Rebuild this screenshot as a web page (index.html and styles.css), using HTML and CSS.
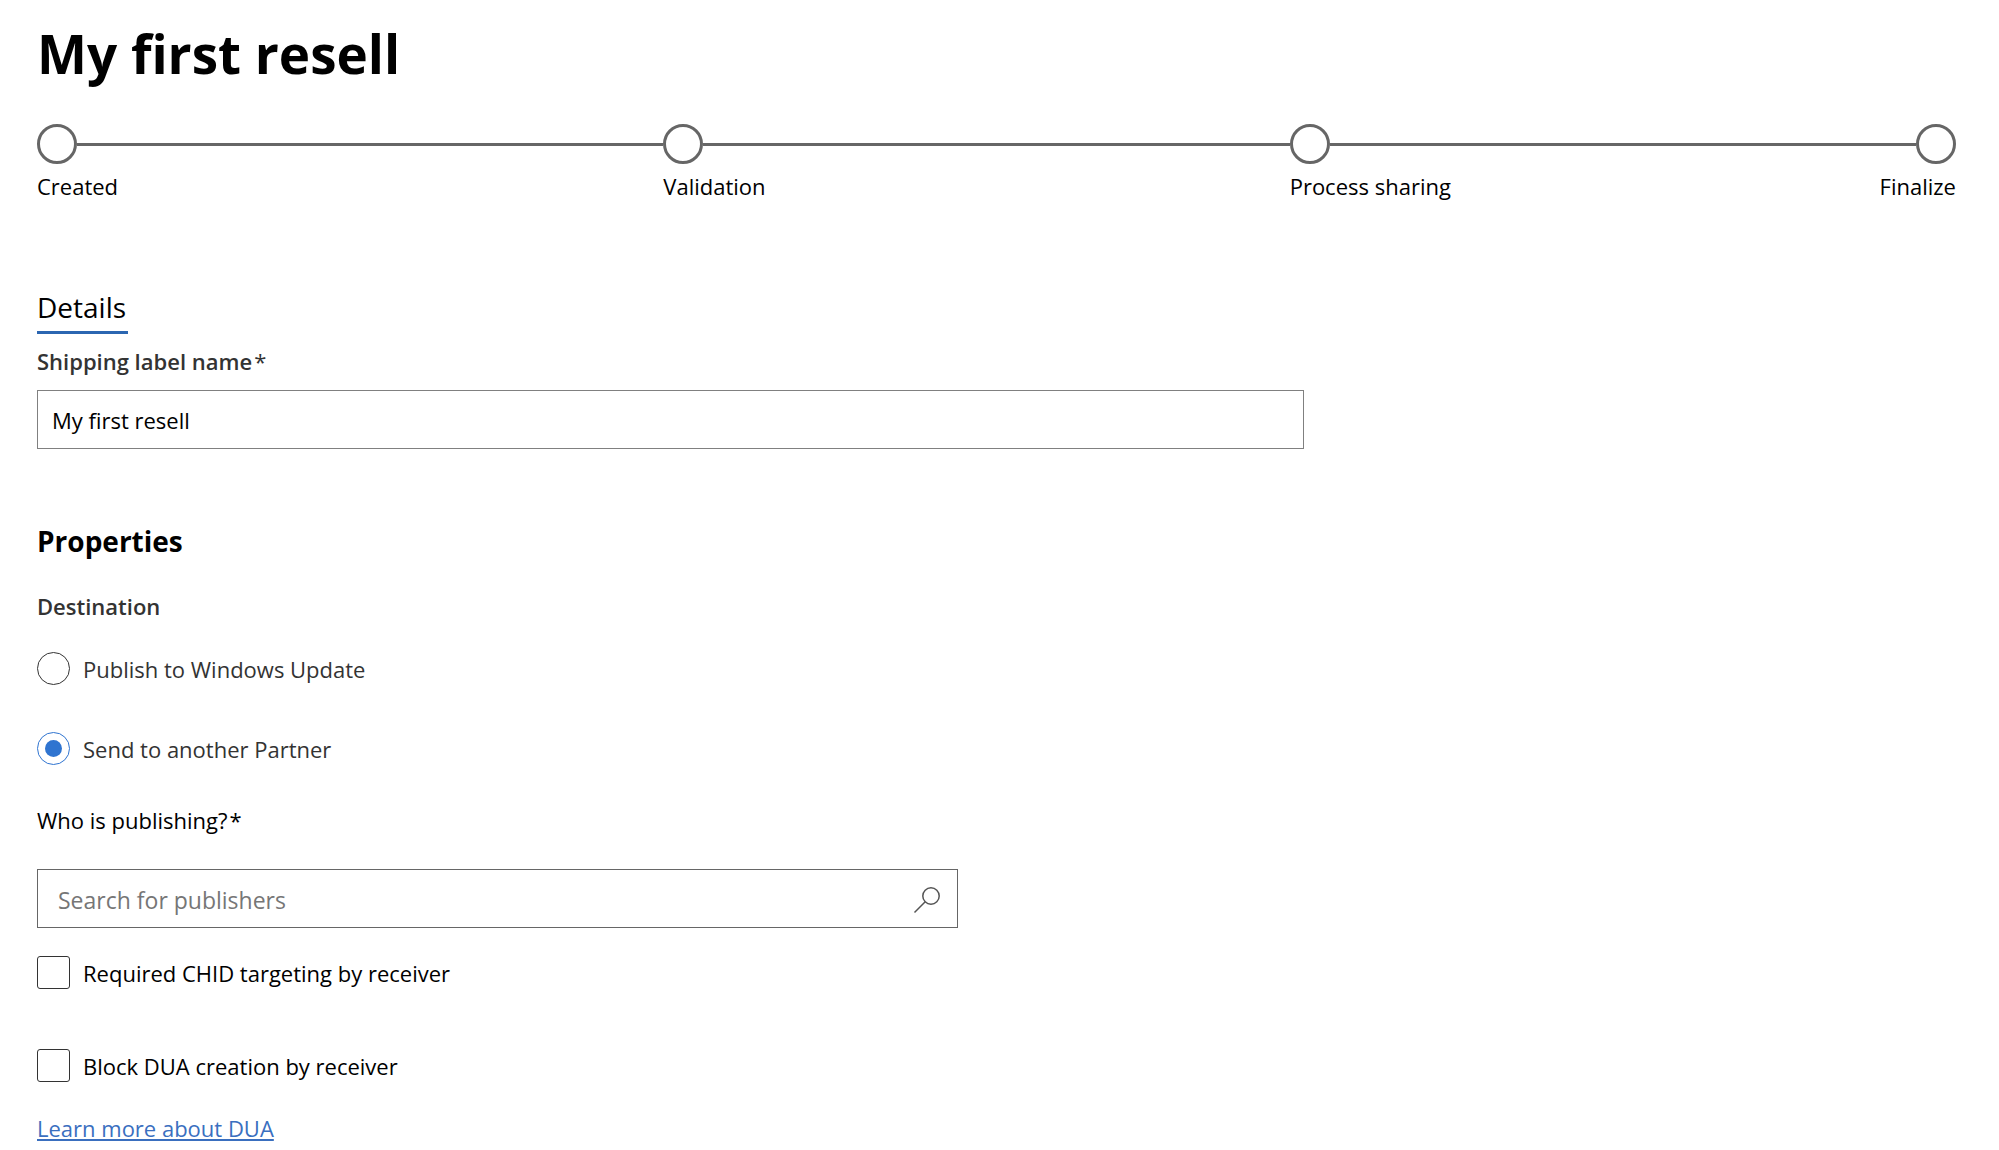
FILE: index.html
```html
<!DOCTYPE html>
<html lang="en">
<head>
    <meta charset="UTF-8" />
    <title>My first resell</title>
    <link rel="stylesheet" href="styles.css">
</head>
<body>
    <main class="page">
        <h1>My first resell</h1>

        <ol class="stepper">
            <li class="step"><div class="step-track"><span class="step-dot"></span></div><span class="step-label">Created</span></li>
            <li class="step"><div class="step-track"><span class="step-dot"></span></div><span class="step-label">Validation</span></li>
            <li class="step"><div class="step-track"><span class="step-dot"></span></div><span class="step-label">Process sharing</span></li>
            <li class="step"><div class="step-track"><span class="step-dot"></span></div><span class="step-label">Finalize</span></li>
        </ol>

        <form>
            <h2 class="tab-title">Details</h2>
            <label class="label strong" for="labelName">Shipping label name<span class="required">*</span></label>
            <input class="text-input" type="text" id="labelName" value="My first resell" required />

            <h2 class="section-title">Properties</h2>
            <fieldset class="destination">
                <legend class="label strong">Destination</legend>
                <label class="option"><input type="radio" name="destination" value="wu" />Publish to Windows Update</label>
                <label class="option"><input type="radio" name="destination" value="partner" checked />Send to another Partner</label>
            </fieldset>

            <label class="label" for="publisher">Who is publishing?<span class="required">*</span></label>
            <div class="search">
                <input type="text" id="publisher" placeholder="Search for publishers" />
                <button type="button" aria-label="Search">
                    <svg width="28" height="28" viewBox="0 0 28 28" fill="none" stroke="#555" stroke-width="1.5">
                        <circle cx="18" cy="10" r="8.2" />
                        <path d="M12.2 15.8 1.5 26.5" />
                    </svg>
                </button>
            </div>

            <div class="checks">
                <label class="option"><input type="checkbox" name="chid" />Required CHID targeting by receiver</label>
                <label class="option"><input type="checkbox" name="dua" />Block DUA creation by receiver</label>
            </div>
            <a class="learn-more" href="#">Learn more about DUA</a>
        </form>
    </main>
</body>
</html>
```
FILE: styles.css
```css
:root {
    --step-size: 40px;
    --step-colour: #666;
    --text-dark: #333;
    --accent: #2f74d0;
}
* { box-sizing: border-box; }
body {
    font-family: "Segoe UI", "Open Sans", "Noto Sans", sans-serif;
    font-size: 22px;
    line-height: 32px;
    background: #fff;
    color: #000;
    margin: 0;
}
input, button { font: inherit; color: inherit; }
.page { padding: 18px 43px 0 37px; }
h1 {
    font-size: 53px;
    line-height: 72px;
    font-weight: 700;
    margin: 0 0 34px;
}

/* Progress stepper */
.stepper {
    display: flex;
    list-style: none;
    margin: 0 0 85px;
    padding: 0;
}
.step {
    flex: 1;
    min-width: 0;
    display: flex;
    flex-direction: column;
    gap: 6px;
}
.step-track {
    display: flex;
    align-items: center;
}
.step-dot {
    flex: none;
    width: var(--step-size);
    height: var(--step-size);
    border: 3px solid var(--step-colour);
    border-radius: 50%;
}
.step-track::after {
    content: "";
    flex: 1;
    height: 3px;
    background: var(--step-colour);
}
.step-label { white-space: nowrap; }
.step:last-child {
    flex: 0 0 var(--step-size);
    align-items: flex-end;
}
.step:last-child .step-track::after { display: none; }

/* Headings and labels */
.tab-title {
    width: fit-content;
    font-size: 28px;
    line-height: 40px;
    font-weight: 400;
    margin: 0 0 11px;
    padding: 0 2px 4px 0;
    border-bottom: 3px solid #2b66b1;
}
.section-title {
    font-size: 28px;
    line-height: 40px;
    font-weight: 700;
    margin: 72px 0 29px;
}
.label { display: block; }
.strong {
    color: var(--text-dark);
    font-weight: 600;
}
.required {
    font-weight: 400;
    padding-left: 2px;
}

/* Text boxes */
.text-input {
    display: block;
    width: 66%;
    height: 59px;
    margin-top: 13px;
    padding: 0 14px;
    border: 1px solid #808080;
    border-radius: 0;
}
.search {
    display: flex;
    width: 48%;
    height: 59px;
    margin: 33px 0 28px;
    border: 1px solid #666;
}
.search input {
    flex: 1;
    min-width: 0;
    font-size: 23px;
    padding: 2px 20px 0;
    border: 0;
    background: none;
}
.search input::placeholder { color: #767676; opacity: 1; }
.search button {
    display: flex;
    align-items: center;
    padding: 2px 16px 0;
    border: 0;
    background: none;
}

/* Radios and tick boxes */
.destination {
    border: 0;
    margin: 0 0 39px;
    padding: 0;
}
.destination legend {
    padding: 0;
    margin-bottom: 30px;
}
.option {
    display: flex;
    align-items: center;
    gap: 13px;
    width: fit-content;
}
.destination .option { color: var(--text-dark); }
.destination .option + .option { margin-top: 47px; }
.checks .option + .option { margin-top: 60px; }
.option input {
    appearance: none;
    flex: none;
    width: 33px;
    height: 33px;
    margin: 0;
    border: 1px solid var(--text-dark);
    border-radius: 3px;
    background: #fff;
}
.option input[type="radio"] {
    display: grid;
    place-items: center;
    border-radius: 50%;
}
.option input[type="radio"]:checked { border-color: var(--accent); }
.option input[type="radio"]:checked::before {
    content: "";
    width: 17px;
    height: 17px;
    border-radius: 50%;
    background: var(--accent);
}
.option input[type="checkbox"]:checked { background: var(--accent); }

.learn-more {
    display: inline-block;
    margin-top: 30px;
    color: #3a6fbf;
    text-decoration-thickness: 2px;
    text-underline-offset: 2px;
    text-decoration-skip-ink: none;
}
```
